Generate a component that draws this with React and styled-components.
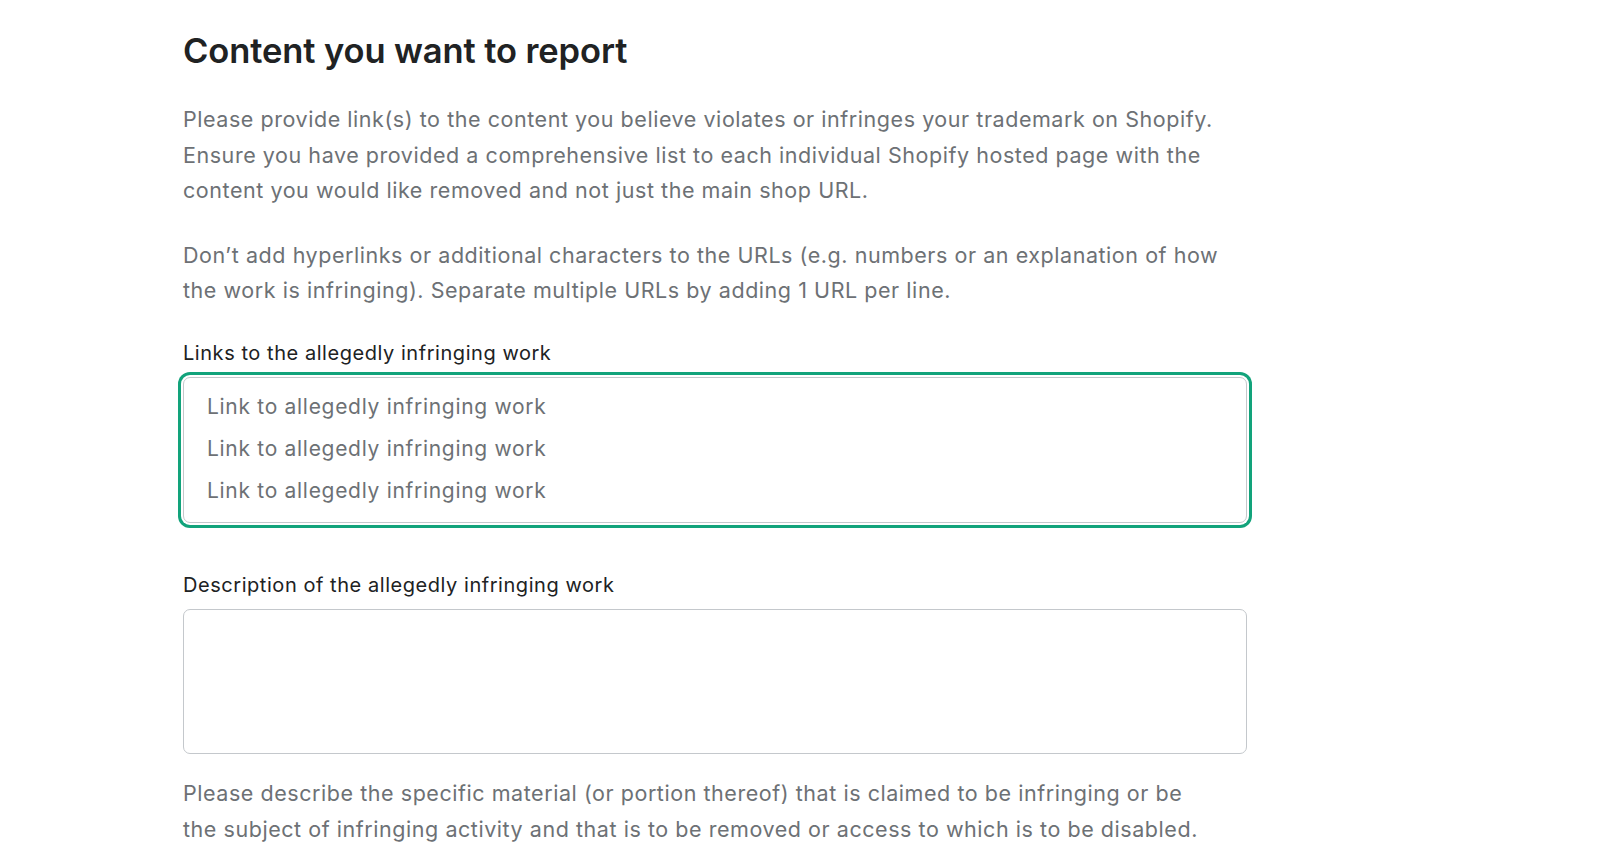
import React from "react";
import styled, { createGlobalStyle } from "styled-components";

const Global = createGlobalStyle`
  html, body { margin: 0; padding: 0; background: #ffffff; }
  body { font-family: Inter, "Noto Sans", sans-serif; -webkit-font-smoothing: antialiased; }
  * { box-sizing: border-box; }
`;

const Page = styled.main`
  padding: 31px 0 0 183px;
  width: 1600px;
  height: 855px;
  overflow: hidden;
`;

const Column = styled.section`
  width: 1064px;
  display: flex;
  flex-direction: column;
`;

const Heading = styled.h2`
  margin: 0;
  font-family: Inter, "Noto Sans", sans-serif;
  font-weight: 600;
  font-size: 34.5px;
  line-height: 40.8px;
  letter-spacing: -0.1px;
  color: #202223;
`;

const Text = styled.p`
  margin: ${(p) => p.$top || 0}px 0 0;
  max-width: ${(p) => p.$max || 1064}px;
  font-size: 21.5px;
  line-height: 35.7px;
  letter-spacing: 0.55px;
  color: #6d7175;
`;

const Label = styled.label`
  display: block;
  margin-top: ${(p) => p.$top}px;
  margin-bottom: 10px;
  font-size: 20px;
  line-height: 28px;
  letter-spacing: 0.55px;
  color: #202223;
`;

const Area = styled.textarea`
  display: block;
  width: 100%;
  height: ${(p) => p.$h}px;
  resize: none;
  margin: 0;
  padding: 8px 23px 9px;
  font-family: Inter, "Noto Sans", sans-serif;
  font-size: 21px;
  line-height: 42px;
  letter-spacing: 0.7px;
  color: #202223;
  background: #ffffff;
  border: 1px solid #c4c8cc;
  border-radius: 7px;
  outline: none;
  box-shadow: ${(p) =>
    p.$focused ? "0 0 0 2px #ffffff, 0 0 0 5px #12a37b" : "none"};
  &::placeholder { color: #6d7175; opacity: 1; }
`;

export default function App() {
  return (
    <>
      <Global />
      <Page>
        <Column>
          <Heading>Content you want to report</Heading>
          <Text $top={30}>
            Please provide link(s) to the content you believe violates or infringes your trademark on Shopify.
            Ensure you have provided a comprehensive list to each individual Shopify hosted page with the
            content you would like removed and not just the main shop URL.
          </Text>
          <Text $top={28.6}>
            Don’t add hyperlinks or additional characters to the URLs (e.g. numbers or an explanation of how
            the work is infringing). Separate multiple URLs by adding 1 URL per line.
          </Text>
          <Label $top={30}>Links to the allegedly infringing work</Label>
          <Area
            $h={146}
            $focused
            placeholder={"Link to allegedly infringing work\nLink to allegedly infringing work\nLink to allegedly infringing work"}
          />
          <Label $top={48}>Description of the allegedly infringing work</Label>
          <Area $h={145} />
          <Text $top={22} $max={1030}>
            Please describe the specific material (or portion thereof) that is claimed to be infringing or be
            the subject of infringing activity and that is to be removed or access to which is to be disabled.
          </Text>
        </Column>
      </Page>
    </>
  );
}
